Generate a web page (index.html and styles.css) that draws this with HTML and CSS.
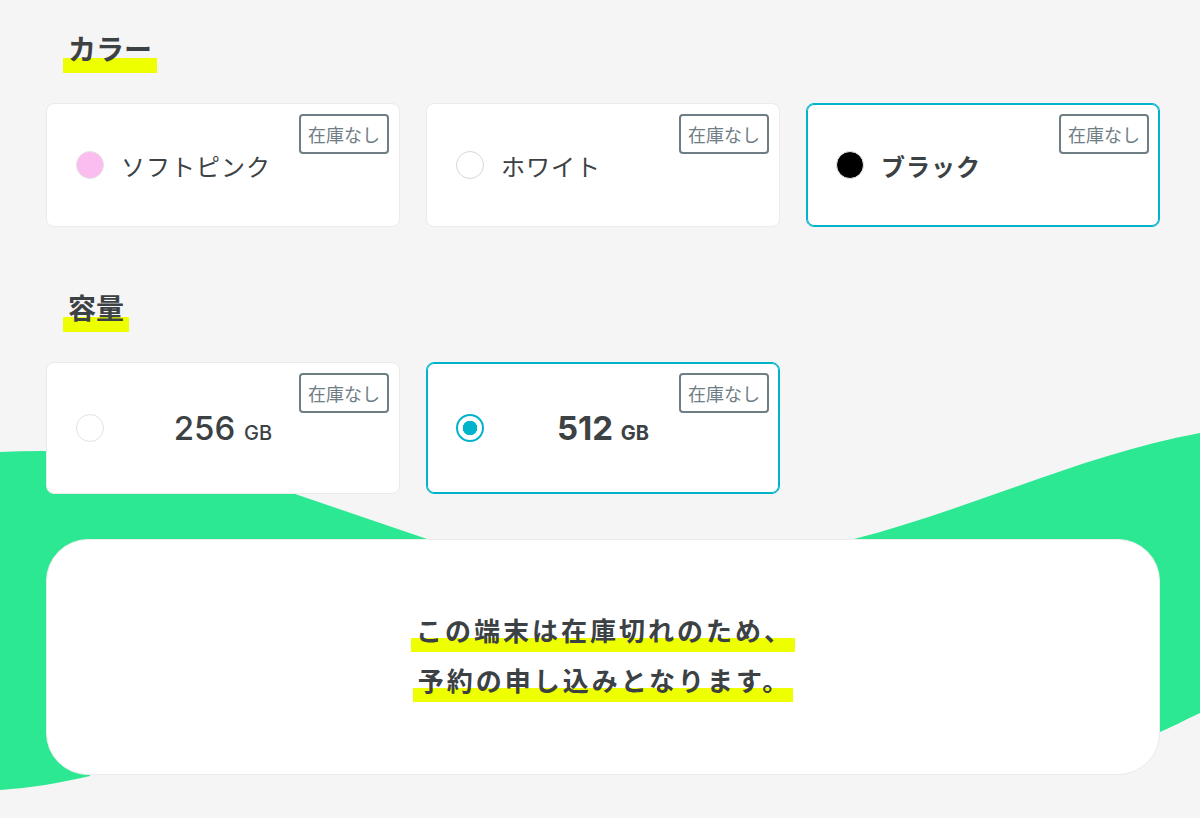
FILE: index.html
```html
<!DOCTYPE html>
<html lang="ja">
<head>
    <meta charset="UTF-8">
    <meta name="viewport" content="width=device-width, initial-scale=1.0">
    <title>機種選択</title>
    <link rel="stylesheet" href="styles.css">
</head>
<body>
    <div class="page">
        <!-- background wave -->
        <svg class="wave" viewBox="0 0 1200 818" aria-hidden="true">
            <path d="M0,452 C100,447 200,460 298,495 L430,540 L850,540 C970,510 1080,455 1200,433 L1200,713 C1185,720 1170,728 1160,732 L1100,700 L90,700 L90,776 C60,783 30,788 0,790 Z" fill="#2ce892"/>
        </svg>

        <section class="group">
            <h2 class="group-title"><span>カラー</span></h2>
            <div class="options">
                <label class="option">
                    <span class="radio radio-pink"></span>
                    <span class="option-name">ソフトピンク</span>
                    <span class="badge">在庫なし</span>
                </label>
                <label class="option">
                    <span class="radio radio-white"></span>
                    <span class="option-name">ホワイト</span>
                    <span class="badge">在庫なし</span>
                </label>
                <label class="option is-selected">
                    <span class="radio radio-black"></span>
                    <span class="option-name">ブラック</span>
                    <span class="badge">在庫なし</span>
                </label>
            </div>
        </section>

        <section class="group group-capacity">
            <h2 class="group-title"><span>容量</span></h2>
            <div class="options">
                <label class="option option-capacity">
                    <span class="radio"></span>
                    <span class="capacity">256 <small>GB</small></span>
                    <span class="badge">在庫なし</span>
                </label>
                <label class="option option-capacity is-selected">
                    <span class="radio radio-checked"></span>
                    <span class="capacity">512 <small>GB</small></span>
                    <span class="badge">在庫なし</span>
                </label>
            </div>
        </section>

        <div class="notice">
            <span class="notice-line">この端末は在庫切れのため、</span>
            <span class="notice-line">予約の申し込みとなります。</span>
        </div>
    </div>
</body>
</html>
```

FILE: styles.css
```css
body {
    margin: 0;
    background-color: #f5f5f5;
    font-family: "Noto Sans CJK JP", "Noto Sans", sans-serif;
    color: #3c4144;
}

.page {
    position: relative;
    height: 818px;
    overflow: hidden;
    padding: 29px 40px 0 46px;
    box-sizing: border-box;
}

.wave {
    position: absolute;
    top: 0;
    left: 0;
    width: 1200px;
    height: 818px;
    z-index: 0;
}

.group,
.notice {
    position: relative;
    z-index: 1;
}

.group-capacity {
    margin-top: 61px;
}

.group-title {
    display: flex;
    margin: 0 0 30px 17px;
    font-size: 28px;
    font-weight: 700;
    line-height: 38px;
}

.group-title span {
    padding: 0 5px 6px;
    background: linear-gradient(transparent calc(100% - 15px), #eeff00 calc(100% - 15px));
}

.options {
    display: grid;
    grid-template-columns: repeat(3, 1fr);
    gap: 26px;
}

.option {
    position: relative;
    display: flex;
    align-items: center;
    height: 124px;
    padding-left: 29px;
    box-sizing: border-box;
    background-color: #fff;
    border: 1px solid #ebebeb;
    border-radius: 8px;
    cursor: pointer;
}

.option.is-selected {
    border-color: #00b4cc;
    box-shadow: inset 0 0 0 1px #00b4cc;
}

.radio {
    flex: none;
    width: 28px;
    height: 28px;
    box-sizing: border-box;
    border: 1.5px solid #e3e3e3;
    border-radius: 50%;
    background-color: #fff;
}

.radio-pink {
    background-color: #fbbcf0;
}

.radio-white {
    border-color: #d6d6d6;
}

.radio-black {
    background-color: #000;
    border-color: #e8e8e8;
}

.radio-checked {
    border: 2px solid #00b4cc;
    background: radial-gradient(circle, #00b4cc 0 7px, #fff 7.5px);
}

.option-name {
    margin-left: 17px;
    font-size: 24px;
    letter-spacing: 1px;
}

.is-selected .option-name {
    font-weight: 700;
}

.badge {
    position: absolute;
    top: 10px;
    right: 10px;
    height: 40px;
    padding: 0 7px;
    box-sizing: border-box;
    border: 2px solid #6f7d85;
    border-radius: 4px;
    color: #6f7d85;
    font-size: 18px;
    line-height: 36px;
}

.option-capacity {
    display: grid;
    grid-template-columns: 28px 1fr 28px;
    height: 132px;
    padding: 0 29px;
}

.capacity {
    text-align: center;
    font-family: Inter, Roboto, sans-serif;
    font-size: 33px;
    font-weight: 500;
}

.capacity small {
    font-size: 20px;
}

.is-selected .capacity {
    font-weight: 700;
}

.notice {
    display: flex;
    flex-direction: column;
    align-items: center;
    justify-content: center;
    gap: 15px;
    height: 236px;
    margin-top: 45px;
    padding-top: 4px;
    box-sizing: border-box;
    background-color: #fff;
    border: 1px solid #ececec;
    border-radius: 42px;
}

.notice-line {
    padding: 0 2px 9px 5px;
    font-size: 26px;
    font-weight: 700;
    line-height: 26px;
    letter-spacing: 3px;
    background: linear-gradient(transparent calc(100% - 14px), #eeff00 calc(100% - 14px));
}
```
